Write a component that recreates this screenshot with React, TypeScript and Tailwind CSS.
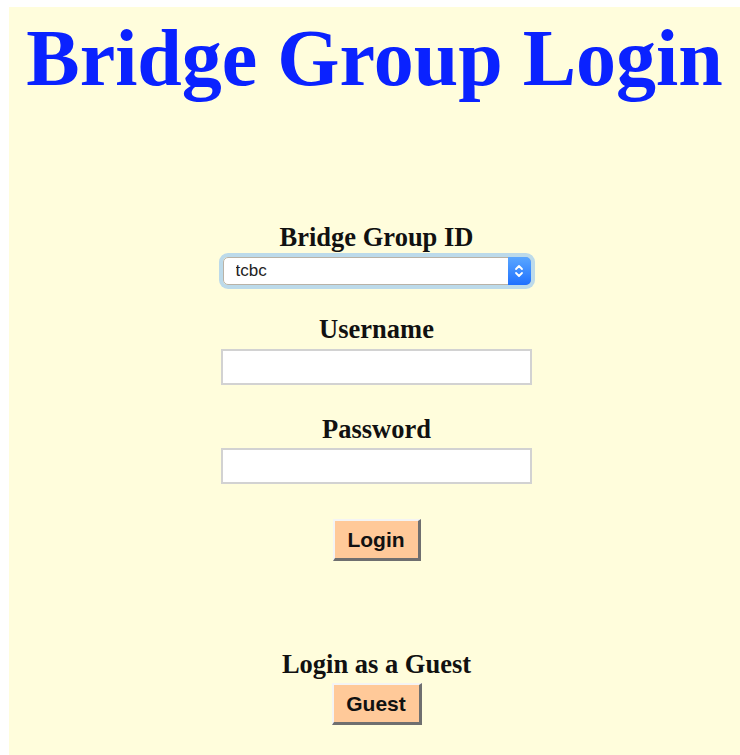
import { useState } from 'react';

const labelClassName =
  "font-['Liberation_Serif',serif] text-[26.5px] font-bold leading-[30px] text-[#111]";

const buttonClassName =
  "h-[42px] border-t-2 border-l-2 border-r-[3px] border-b-[3px] border-t-[#f4f4f4] border-l-[#f4f4f4] border-r-[#6f6f6f] border-b-[#6f6f6f] bg-[#ffc999] font-['Liberation_Sans',sans-serif] text-[21px] font-bold leading-none text-[#111]";

const inputClassName =
  'h-9 w-[311px] border-2 border-[#d2d2d2] bg-white px-2 text-base outline-none';

function SelectArrows() {
  return (
    <svg width="10" height="16" viewBox="0 0 10 16" fill="none">
      <path d="M2 6l3-3 3 3" stroke="white" strokeWidth="1.8" strokeLinecap="round" strokeLinejoin="round" />
      <path d="M2 10l3 3 3-3" stroke="white" strokeWidth="1.8" strokeLinecap="round" strokeLinejoin="round" />
    </svg>
  );
}

export default function App() {
  const [group, setGroup] = useState('tcbc');
  const [username, setUsername] = useState('');
  const [password, setPassword] = useState('');

  return (
    <div className="min-h-screen bg-white pl-[9px] pt-[7px]">
      <div className="flex min-h-[748px] flex-col items-center bg-[#fffddc]">
        <h1 className="mt-[11px] whitespace-nowrap font-['Liberation_Serif',serif] text-[80px] font-bold leading-none text-[#0a22ff]">
          Bridge Group Login
        </h1>

        <form
          className="ml-[4px] mt-[124px] flex flex-col items-center"
          onSubmit={(e) => e.preventDefault()}
        >
          <label className={labelClassName}>Bridge Group ID</label>
          <div className="relative mt-[5px] h-7 w-[308px] rounded-[5px] ring-4 ring-[#bcdaea]">
            <select
              value={group}
              onChange={(e) => setGroup(e.target.value)}
              className="h-full w-full appearance-none rounded-[5px] border border-[#b9b2a6] bg-white pl-3 font-['Liberation_Sans',sans-serif] text-[17px] text-[#222] outline-none"
            >
              <option value="tcbc">tcbc</option>
            </select>
            <div className="pointer-events-none absolute right-0 top-0 flex h-full w-[23px] items-center justify-center rounded-r-[5px] bg-gradient-to-b from-[#5aa6ff] to-[#1f70ff]">
              <SelectArrows />
            </div>
          </div>

          <label className={`${labelClassName} mt-[29px]`}>Username</label>
          <input
            type="text"
            value={username}
            onChange={(e) => setUsername(e.target.value)}
            className={`${inputClassName} mt-[5px]`}
          />

          <label className={`${labelClassName} mt-[29px]`}>Password</label>
          <input
            type="password"
            value={password}
            onChange={(e) => setPassword(e.target.value)}
            className={`${inputClassName} mt-[4px]`}
          />

          <button type="submit" className={`${buttonClassName} mt-[35px] w-[88px]`}>
            Login
          </button>

          <p className={`${labelClassName} mt-[88px]`}>Login as a Guest</p>
          <button type="button" className={`${buttonClassName} mt-[4px] w-[90px]`}>
            Guest
          </button>
        </form>
      </div>
    </div>
  );
}
